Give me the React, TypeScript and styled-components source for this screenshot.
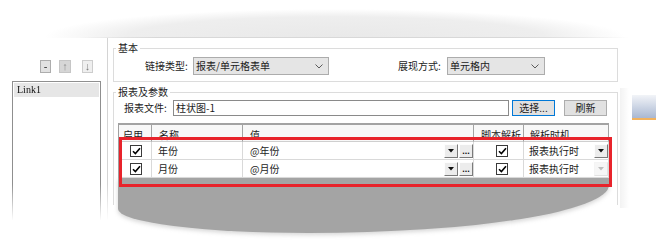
import React from "react";
import styled, { createGlobalStyle } from "styled-components";

const GlobalStyle = createGlobalStyle`
  html, body { margin: 0; padding: 0; background: #ffffff; }
  #root { width: 656px; height: 241px; }
`;

const UI_FONT = `"Noto Sans CJK SC", "Noto Sans", "Liberation Sans", sans-serif`;

const Page = styled.div`
  width: 656px;
  height: 241px;
  overflow: hidden;
  background: #fff;
  display: flex;
  flex-direction: column;
  font-family: ${UI_FONT};
  font-size: 10px;
  line-height: 12px;
  color: #1c1c1c;
`;

const TopShade = styled.div`
  flex: none;
  height: 38px;
  background:
    linear-gradient(to right, rgba(214,214,214,0) 12%, #d8d8d8 24%, #d8d8d8 78%, rgba(214,214,214,0) 96%) bottom / 100% 1px no-repeat,
    radial-gradient(ellipse 290px 28px at 335px 37px, #e9e9e9 0%, #eeeeee 72%, rgba(255,255,255,0) 100%);
`;

const Window = styled.div`
  flex: 1;
  min-height: 0;
  display: flex;
`;

const LeftPane = styled.div`
  flex: none;
  width: 107px;
  display: flex;
  flex-direction: column;
  padding-top: 22px;
  border-right: 1px solid #d4d4d4;
  -webkit-mask-image: linear-gradient(to bottom, #000 72%, transparent 90%);
  mask-image: linear-gradient(to bottom, #000 72%, transparent 90%);
`;

const Toolbar = styled.div`
  display: flex;
  height: 13px;
  padding-left: 40px;
`;

const ToolButton = styled.div<{ $w: number; $ml?: number; $bg: string; $bd: string; $fg: string }>`
  flex: none;
  box-sizing: border-box;
  width: ${(p) => p.$w}px;
  height: 13px;
  margin-left: ${(p) => p.$ml ?? 0}px;
  background: ${(p) => p.$bg};
  border: 1px solid ${(p) => p.$bd};
  color: ${(p) => p.$fg};
  font-family: "Liberation Sans", sans-serif;
  font-size: 11px;
  line-height: 11px;
  text-align: center;
`;

const ListBox = styled.div`
  flex: 1;
  box-sizing: border-box;
  width: 89px;
  margin: 8px 0 0 12px;
  padding: 1px;
  border: 1px solid #8f8f8f;
  border-bottom: none;
  background: #fff;
`;

const ListItem = styled.div<{ $selected?: boolean }>`
  height: 14px;
  line-height: 14px;
  padding-left: 3px;
  font-family: "Liberation Serif", serif;
  font-size: 10px;
  color: #111;
  background: ${(p) => (p.$selected ? "#e6e6e6" : "transparent")};
`;

const RightPane = styled.div`
  flex: none;
  width: 512px;
  box-sizing: border-box;
  padding: 5px 2px 0 5px;
  display: flex;
  flex-direction: column;
  gap: 5px;
`;

const Group = styled.fieldset<{ $pad: string; $h?: number; $open?: boolean }>`
  margin: 0;
  min-width: 0;
  box-sizing: border-box;
  padding: ${(p) => p.$pad};
  border: 1px solid #dcdcdc;
  ${(p) => (p.$open ? "border-bottom: none;" : "")}
  ${(p) => (p.$h ? `height: ${p.$h}px;` : "")}
`;

const Legend = styled.legend`
  margin-left: 2px;
  padding: 0 2px;
  font-size: 10px;
  line-height: 10px;
  color: #1c1c1c;
`;

const FormRow = styled.div<{ $h: number; $pl: number }>`
  display: flex;
  align-items: center;
  height: ${(p) => p.$h}px;
  padding-left: ${(p) => p.$pl}px;
`;

const FieldLabel = styled.span<{ $w: number; $ml?: number }>`
  flex: none;
  width: ${(p) => p.$w}px;
  margin-left: ${(p) => p.$ml ?? 0}px;
  white-space: nowrap;
`;

const Select = styled.div<{ $w: number }>`
  flex: none;
  box-sizing: border-box;
  width: ${(p) => p.$w}px;
  height: 18px;
  padding: 0 5px 0 2px;
  border: 1px solid #acacac;
  background: #e5e5e5;
  display: flex;
  align-items: center;
  justify-content: space-between;
  white-space: nowrap;
`;

const TextInput = styled.div<{ $w: number }>`
  flex: none;
  box-sizing: border-box;
  width: ${(p) => p.$w}px;
  height: 16px;
  padding-left: 2px;
  border: 1px solid #8a8a8a;
  background: #fff;
  line-height: 14px;
  white-space: nowrap;
`;

const PushButton = styled.div<{ $ml: number; $focused?: boolean }>`
  flex: none;
  box-sizing: border-box;
  width: 43px;
  height: 16px;
  margin-left: ${(p) => p.$ml}px;
  border: 1px solid ${(p) => (p.$focused ? "#0078d7" : "#adadad")};
  background: #e1e1e1;
  line-height: 14px;
  text-align: center;
  white-space: nowrap;
`;

const TableWrap = styled.div`
  position: relative;
  width: 491px;
  margin: 7px 0 0 4px;
`;

const Grid = styled.div`
  display: grid;
  grid-template-columns: 33px 91px 231px 50px 85px;
  border-left: 1px solid #a0a0a0;
  background: #fff;
`;

const HeaderCell = styled.div<{ $pl: number }>`
  box-sizing: border-box;
  height: 19px;
  padding-left: ${(p) => p.$pl}px;
  border-top: 2px solid #a3a3a3;
  border-right: 1px solid #a3a3a3;
  border-bottom: 1px solid #cfcfcf;
  background: #f8f8f8;
  line-height: 19px;
  white-space: nowrap;
  overflow: hidden;
`;

const Cell = styled.div<{ $pl: number }>`
  box-sizing: border-box;
  height: 18px;
  padding-left: ${(p) => p.$pl}px;
  border-right: 1px solid #d9d9d9;
  border-bottom: 1px solid #d9d9d9;
  display: flex;
  align-items: center;
  white-space: nowrap;
`;

const CellText = styled.span`
  flex: 1;
`;

const CheckBox = styled.div`
  flex: none;
  box-sizing: border-box;
  width: 12px;
  height: 12px;
  border: 1px solid #3a3a3a;
  background: #fff;
  display: flex;
  align-items: center;
  justify-content: center;
`;

const SmallButton = styled.div<{ $disabled?: boolean; $ml?: number }>`
  flex: none;
  box-sizing: border-box;
  width: 14px;
  height: 14px;
  margin-left: ${(p) => p.$ml ?? 0}px;
  border: 1px solid;
  border-color: ${(p) => (p.$disabled ? "#f4f4f4 #e2e2e2 #e2e2e2 #f4f4f4" : "#fdfdfd #7b7b7b #7b7b7b #fdfdfd")};
  background: ${(p) => (p.$disabled ? "#f6f6f6" : "#ececec")};
  display: flex;
  align-items: center;
  justify-content: center;
  font-family: "Liberation Sans", sans-serif;
  font-size: 9px;
  font-weight: bold;
  line-height: 8px;
  color: #111;
`;

const GreyTail = styled.div`
  width: 491px;
  height: 55px;
  background: #a4a4a4;
  border-bottom-left-radius: 190px 24px;
  border-bottom-right-radius: 300px 48px;
  box-shadow: 0 2px 4px rgba(164, 164, 164, 0.45);
`;

const RedMark = styled.div`
  position: absolute;
  left: 1px;
  top: 14px;
  width: 493px;
  height: 50px;
  box-sizing: border-box;
  border: 3px solid #e8232b;
  pointer-events: none;
`;

const Backdrop = styled.div`
  flex: none;
  width: 36px;
  display: flex;
  flex-direction: column;
  background: linear-gradient(to right, rgba(0, 0, 0, 0.05), rgba(0, 0, 0, 0) 9px) 0 50px / 100% 120px no-repeat;
`;

const BehindWindow = styled.div`
  height: 23px;
  margin: 57px 0 0 12px;
  background: linear-gradient(to bottom, #f2f4f8, #a9b8d2);
  border-bottom: 2px solid #f2b35f;
`;

const Check = () => (
  <svg width="9" height="8" viewBox="0 0 9 8">
    <path d="M1 4.2 L3.4 6.6 L8 1.2" fill="none" stroke="#000" strokeWidth="1.6" />
  </svg>
);

const Chevron = () => (
  <svg width="8" height="5" viewBox="0 0 8 5">
    <polyline points="0.5,0.5 4,4 7.5,0.5" fill="none" stroke="#5a5a5a" strokeWidth="1" />
  </svg>
);

const Tri = ({ color }: { color: string }) => (
  <svg width="6" height="4" viewBox="0 0 6 4">
    <polygon points="0,0 6,0 3,3.5" fill={color} />
  </svg>
);

const headers: { label: string; pl: number }[] = [
  { label: "启用", pl: 4 },
  { label: "名称", pl: 7 },
  { label: "值", pl: 7 },
  { label: "脚本解析", pl: 7 },
  { label: "解析时机", pl: 6 },
];

const rows = [
  { name: "年份", value: "@年份", timing: "报表执行时", active: true },
  { name: "月份", value: "@月份", timing: "报表执行时", active: false },
];

export default function App() {
  return (
    <>
      <GlobalStyle />
      <Page>
        <TopShade />
        <Window>
          <LeftPane>
            <Toolbar>
              <ToolButton $w={11} $bg="#e1e1e1" $bd="#adadad" $fg="#333">-</ToolButton>
              <ToolButton $w={12} $ml={8} $bg="#d6d6d6" $bd="#c6c6c6" $fg="#8f8f8f">↑</ToolButton>
              <ToolButton $w={11} $ml={11} $bg="#efefef" $bd="#cdcdcd" $fg="#7a7a7a">↓</ToolButton>
            </Toolbar>
            <ListBox>
              <ListItem $selected>Link1</ListItem>
            </ListBox>
          </LeftPane>

          <RightPane>
            <Group $pad="4px 0 6px 0">
              <Legend>基本</Legend>
              <FormRow $h={18} $pl={31}>
                <FieldLabel $w={48}>链接类型:</FieldLabel>
                <Select $w={136}>
                  <span>报表/单元格表单</span>
                  <Chevron />
                </Select>
                <FieldLabel $w={49} $ml={69}>展现方式:</FieldLabel>
                <Select $w={98}>
                  <span>单元格内</span>
                  <Chevron />
                </Select>
              </FormRow>
            </Group>

            <Group $pad="3px 0 0 0" $h={118} $open>
              <Legend>报表及参数</Legend>
              <FormRow $h={16} $pl={10}>
                <FieldLabel $w={49}>报表文件:</FieldLabel>
                <TextInput $w={336}>柱状图-1</TextInput>
                <PushButton $ml={3} $focused>选择...</PushButton>
                <PushButton $ml={9}>刷新</PushButton>
              </FormRow>

              <TableWrap>
                <Grid>
                  {headers.map((h) => (
                    <HeaderCell key={h.label} $pl={h.pl}>{h.label}</HeaderCell>
                  ))}
                  {rows.map((r) => (
                    <React.Fragment key={r.name}>
                      <Cell $pl={11}>
                        <CheckBox><Check /></CheckBox>
                      </Cell>
                      <Cell $pl={6}>
                        <CellText>{r.name}</CellText>
                      </Cell>
                      <Cell $pl={7}>
                        <CellText>{r.value}</CellText>
                        <SmallButton><Tri color="#111" /></SmallButton>
                        <SmallButton $ml={1}>...</SmallButton>
                      </Cell>
                      <Cell $pl={22}>
                        <CheckBox><Check /></CheckBox>
                      </Cell>
                      <Cell $pl={5}>
                        <CellText>{r.timing}</CellText>
                        <SmallButton $disabled={!r.active}>
                          <Tri color={r.active ? "#111" : "#bdbdbd"} />
                        </SmallButton>
                      </Cell>
                    </React.Fragment>
                  ))}
                </Grid>
                <GreyTail />
                <RedMark />
              </TableWrap>
            </Group>
          </RightPane>

          <Backdrop>
            <BehindWindow />
          </Backdrop>
        </Window>
      </Page>
    </>
  );
}
